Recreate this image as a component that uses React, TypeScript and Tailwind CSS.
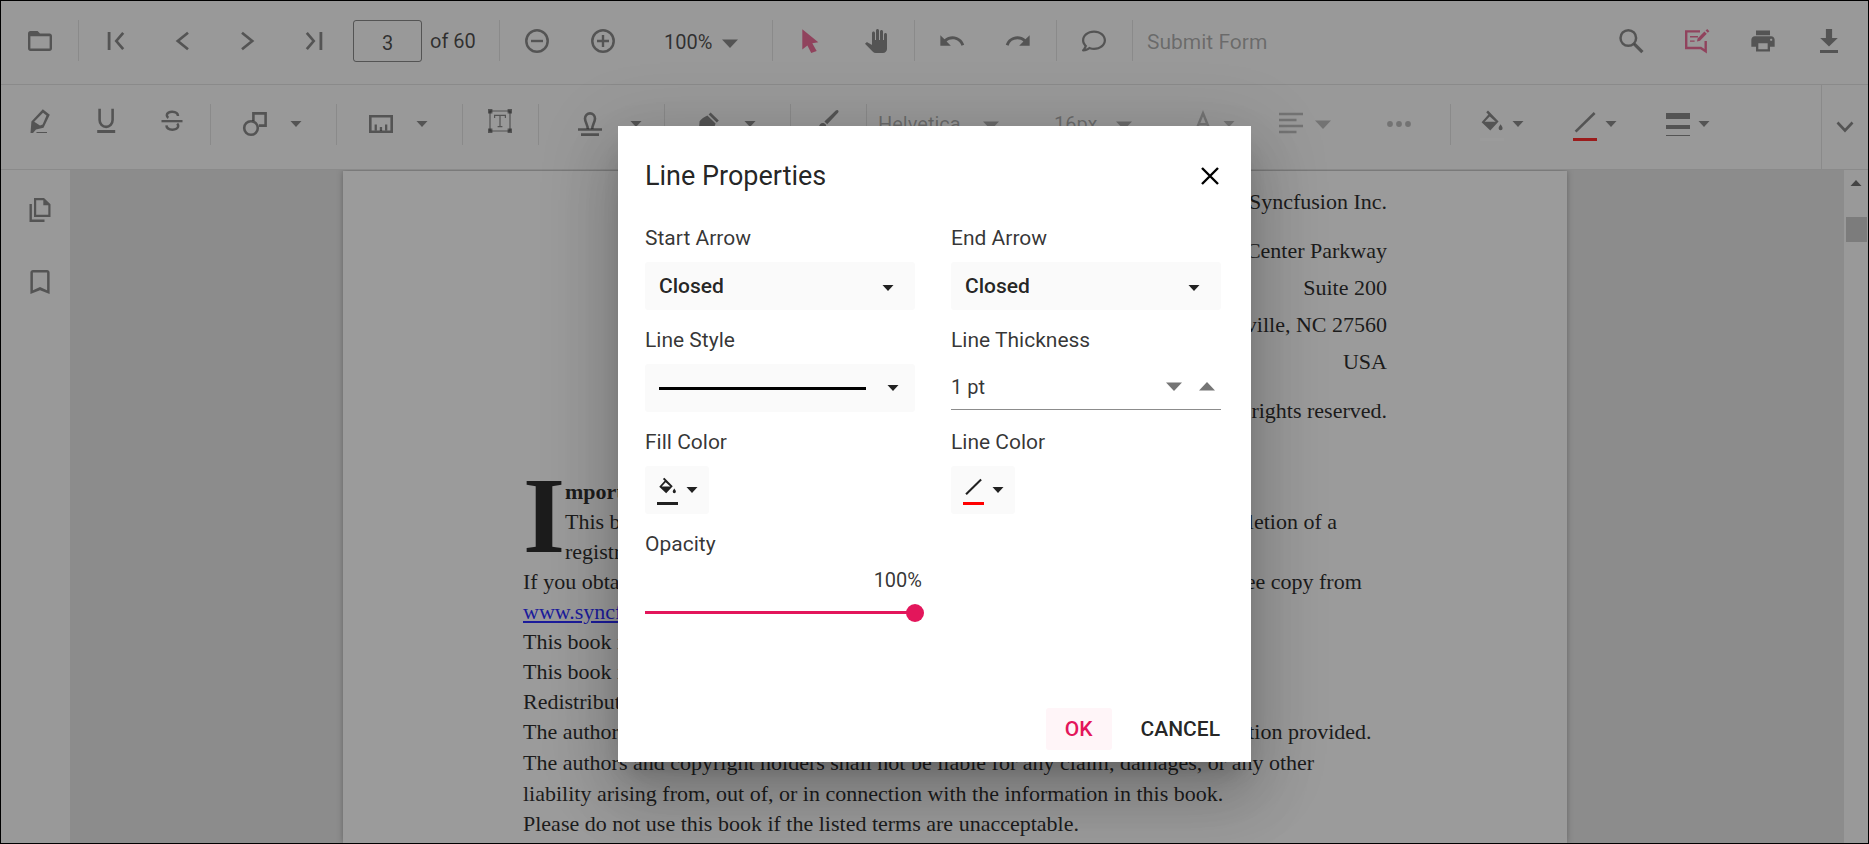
import React from "react";
import { FaRegComment } from "react-icons/fa";
import { MdPanTool, MdPrint, MdRedo, MdUndo } from "react-icons/md";

type Kids = { children?: React.ReactNode };

function Icon({ children, size = 24 }: Kids & { size?: number }) {
  return (
    <svg width={size} height={size} viewBox="0 0 24 24" fill="currentColor" className="shrink-0 overflow-visible" aria-hidden="true">
      {children}
    </svg>
  );
}

function SmallCaret({ up = false }: { up?: boolean }) {
  return (
    <svg width="12" height="6" viewBox="0 0 12 6" fill="currentColor" className="shrink-0" aria-hidden="true">
      <path d={up ? "M0.5 6h11L6 0z" : "M0.5 0h11L6 6z"} />
    </svg>
  );
}

function BigCaret({ up = false }: { up?: boolean }) {
  return (
    <svg width="16" height="9" viewBox="0 0 16 9" fill="currentColor" className="shrink-0" aria-hidden="true">
      <path d={up ? "M0 8.5h16L8 0z" : "M0 0.5h16L8 9z"} />
    </svg>
  );
}

function Separator() {
  return <span className="ml-[5px] mr-1 h-[41px] w-px shrink-0 bg-[#dcdcdc]" />;
}

function ToolButton({ label, children, active = false }: Kids & { label: string; active?: boolean }) {
  return (
    <button
      type="button"
      aria-label={label}
      className={
        active
          ? "flex h-[54px] w-[66px] shrink-0 items-center justify-center text-[#e3165b]/75"
          : "flex h-[54px] w-[66px] shrink-0 items-center justify-center"
      }
    >
      {children}
    </button>
  );
}

function FormatButton({ label, children }: Kids & { label: string }) {
  return (
    <button type="button" aria-label={label} className="flex h-[54px] w-[66px] shrink-0 items-center justify-center pb-[6px]">
      {children}
    </button>
  );
}

function FolderIcon() {
  return (
    <Icon>
      <path
        fillRule="evenodd"
        d="M2.4 2h7.2L12 4.6h9.6c1.3 0 2.4 1 2.4 2.4v12.6c0 1.3-1.1 2.4-2.4 2.4H2.4C1.1 22 0 21 0 19.6V4.4C0 3 1.1 2 2.4 2zM2.4 7.2v12.4h19.2V7.2z"
      />
    </Icon>
  );
}

function Chevron({ points }: { points: string }) {
  return <polyline points={points} fill="none" stroke="currentColor" strokeWidth="2.7" />;
}

function BucketIcon() {
  return (
    <Icon>
      <path d="M6.2 1.2 8 -.4 18.6 10.4 10.3 19.4 1.6 11.2 8.4 3.6zM9.7 5.4 4.7 10.7h11z" fillRule="evenodd" />
      <path d="M20.6 13.2c1.2 1.7 2 3 2 4a2 2 0 0 1-4 0c0-1 .8-2.3 2-4z" />
    </Icon>
  );
}

function DiagonalIcon() {
  return (
    <Icon>
      <path d="M2.6 20.6 21.6 2" fill="none" stroke="currentColor" strokeWidth="2.6" />
    </Icon>
  );
}

function MainToolbar() {
  return (
    <div role="toolbar" aria-label="Viewer" className="flex h-[84px] shrink-0 items-center border-b border-[#dcdcdc] bg-[#fafafa] px-[6px] pb-1 text-black/55">
      <ToolButton label="Open file"><FolderIcon /></ToolButton>
      <Separator />
      <ToolButton label="First page">
        <Icon><path d="M3.7 3h2.8v18H3.7z" /><Chevron points="19.2 3.8 12.3 12 19.2 20.2" /></Icon>
      </ToolButton>
      <ToolButton label="Previous page"><Icon><Chevron points="18 3.8 7.8 12 18 20.2" /></Icon></ToolButton>
      <ToolButton label="Next page"><Icon><Chevron points="6 3.8 16.2 12 6 20.2" /></Icon></ToolButton>
      <ToolButton label="Last page">
        <Icon><path d="M17.5 3h2.8v18h-2.8z" /><Chevron points="4.8 3.8 11.7 12 4.8 20.2" /></Icon>
      </ToolButton>
      <div className="flex w-[147px] shrink-0 items-center gap-2 pl-[6px] text-[20px] text-black/85">
        <input aria-label="Page number" defaultValue="3" className="h-[42px] w-[69px] rounded-[3px] border border-black/55 bg-transparent pt-1 text-center" />
        <span className="whitespace-nowrap">of 60</span>
      </div>
      <Separator />
      <ToolButton label="Zoom out">
        <Icon><circle cx="12" cy="12" r="10.7" fill="none" stroke="currentColor" strokeWidth="2.5" /><path d="M6 10.8h12v2.4H6z" /></Icon>
      </ToolButton>
      <ToolButton label="Zoom in">
        <Icon><circle cx="12" cy="12" r="10.7" fill="none" stroke="currentColor" strokeWidth="2.5" /><path d="M6 10.8h4.8V6h2.4v4.8H18v2.4h-4.8V18h-2.4v-4.8H6z" /></Icon>
      </ToolButton>
      <div className="relative w-[131px] shrink-0">
        <select aria-label="Zoom level" className="h-[42px] w-full appearance-none bg-transparent pl-7 pt-0.5 text-[20px] text-black/85">
          <option>100%</option>
        </select>
        <span className="pointer-events-none absolute right-[29px] top-[19px]"><BigCaret /></span>
      </div>
      <Separator />
      <ToolButton label="Select text" active>
        <Icon><path d="M4.3.3 20.3 13.2l-6 1.1 4.4 7.6-5.5 2.1-3.8-7.6-5.1 4z" /></Icon>
      </ToolButton>
      <ToolButton label="Pan"><MdPanTool size={24} /></ToolButton>
      <Separator />
      <ToolButton label="Undo"><MdUndo size={28} /></ToolButton>
      <ToolButton label="Redo"><MdRedo size={28} /></ToolButton>
      <Separator />
      <ToolButton label="Add comment"><FaRegComment size={24} /></ToolButton>
      <Separator />
      <button type="button" disabled className="h-[42px] shrink-0 whitespace-nowrap pl-[10px] pt-1 text-[21px] text-black/38">
        Submit Form
      </button>
      <div className="ml-auto flex shrink-0">
        <ToolButton label="Find text">
          <Icon><circle cx="9.3" cy="9" r="7.8" fill="none" stroke="currentColor" strokeWidth="2.5" /><path d="M15.4 15.2l8 8" stroke="currentColor" strokeWidth="3.2" /></Icon>
        </ToolButton>
        <ToolButton label="Edit annotations" active>
          <Icon>
            <path d="M15 2.4H1.2v16.6h14.6l4.9 3.2V12" fill="none" stroke="currentColor" strokeWidth="2.4" />
            <path d="M5 7h8v1.4H5zM5 11.4h4.6v1.4H5zM12 12.6l.6-3.2 6.8-7 2.4 2.3-6.8 7zM20.6 1.6 22.2 0l2.2 2.2-1.6 1.6z" />
          </Icon>
        </ToolButton>
        <ToolButton label="Print"><MdPrint size={28} /></ToolButton>
        <ToolButton label="Download">
          <Icon><path d="M8.9 0h6.2v9h5.7L12 17.6 3.2 9h5.7zM3 21h18v3H3z" /></Icon>
        </ToolButton>
      </div>
    </div>
  );
}

function AnnotationToolbar() {
  return (
    <div role="toolbar" aria-label="Annotations" className="flex h-[85px] shrink-0 items-stretch border-b border-[#dcdcdc] bg-[#fafafa] pl-[6px] text-black/55">
      <div className="flex min-w-0 flex-1 items-center overflow-hidden pb-[6px]">
        <FormatButton label="Highlight">
          <Icon>
            <path fillRule="evenodd" d="M14.8.3 21.8 5.7 15.5 18.7 8 20.6 5 24H2.5l.9-11.5zM15 3.8 6.2 12.7 12 16.4l2.6-1L18.5 6.5z" />
            <path d="M8.5 23h10.5v1H8.5z" />
          </Icon>
        </FormatButton>
        <FormatButton label="Underline">
          <Icon>
            <path d="M5.6-.3v11.2a6.5 7 0 0 0 13 0V-.3" fill="none" stroke="currentColor" strokeWidth="2.6" />
            <path d="M3.2 21h18v3h-18z" />
          </Icon>
        </FormatButton>
        <FormatButton label="Strikethrough">
          <Icon>
            <path d="M1.5 11h21v2.3h-21z" />
            <path d="M18 7C17.6 1.4 6.8 1.6 6.8 6.3c0 1.2.6 2 1.6 2.6M6.4 16.4c.4 5.8 11.8 5.4 11.8.5 0-1-.4-1.7-1-2.3" fill="none" stroke="currentColor" strokeWidth="2.5" />
          </Icon>
        </FormatButton>
        <Separator />
        <button type="button" aria-label="Shapes" className="flex h-[54px] w-[116px] shrink-0 items-center gap-[23px] pl-7">
          <Icon>
            <path d="M10.4 9V1.4h12.2v12.2H16" fill="none" stroke="currentColor" strokeWidth="2.6" />
            <circle cx="8" cy="16" r="6.8" fill="none" stroke="currentColor" strokeWidth="2.6" />
          </Icon>
          <SmallCaret />
        </button>
        <Separator />
        <button type="button" aria-label="Measure" className="flex h-[54px] w-[116px] shrink-0 items-center gap-[23px] pl-7">
          <Icon>
            <path d="M1.3 4.3h21.4v15.4H1.3z" fill="none" stroke="currentColor" strokeWidth="2.6" />
            <path d="M5.6 12.5h2.3v6H5.6zM10.8 15h2.3v4h-2.3zM16 12.5h2.3v6H16z" />
          </Icon>
          <SmallCaret />
        </button>
        <Separator />
        <FormatButton label="Free text">
          <Icon>
            <path d="M2 2h20v20H2z" fill="none" stroke="currentColor" strokeWidth="1.2" />
            <path d="M0 0h4.4v4.4H0zM19.6 0H24v4.4h-4.4zM0 19.6h4.4V24H0zM19.6 19.6H24V24h-4.4z" />
            <path d="M6.6 9V6.4h10.8V9M12 6.4v11.2M9.6 17.6h4.8" fill="none" stroke="currentColor" strokeWidth="1.2" />
          </Icon>
        </FormatButton>
        <Separator />
        <button type="button" aria-label="Stamp" className="flex h-[54px] w-[116px] shrink-0 items-center gap-7 pl-[35px]">
          <Icon>
            <path d="M9.6 17c.8-3.4-2.6-6.4-2.6-10.4a5 5.2 0 0 1 10 0c0 4-3.4 7-2.6 10.4" fill="none" stroke="currentColor" strokeWidth="2.6" />
            <path d="M0 16.2h24v2.6H0zM3 21.2h18V24H3z" />
          </Icon>
          <SmallCaret />
        </button>
        <Separator />
        <button type="button" aria-label="Signature" className="flex h-[54px] w-[116px] shrink-0 items-center gap-[23px] pl-7">
          <Icon>
            <path d="M11.6 2.6 13.6.6l8.2 8-2 2zM10.4 3.6l8.2 8c-.8 4-3.6 6.6-8 8L4.4 22 2 20.6l6.4-6.6L1.6 20 2.6 9.2c2-2.6 4.4-3.8 7.800-5.600z" />
          </Icon>
          <SmallCaret />
        </button>
        <Separator />
        <FormatButton label="Ink">
          <Icon>
            <path d="M8.4 12.400 19.800 1.600c1.800-1.600 3.800.4 2.200 2.200L11.200 15.200zM6.600 14c3.200 0 4.200 2.600 3.400 5-1 3-5.800 4-9.400 1.800 2.400-.6 2-6.800 6-6.800z" />
          </Icon>
        </FormatButton>
        <Separator />
        <div className="relative w-[167px] shrink-0 text-black/38">
          <select aria-label="Font family" disabled className="h-[42px] w-full appearance-none bg-transparent pl-[7px] text-[20px] disabled:opacity-100">
            <option>Helvetica</option>
          </select>
          <span className="pointer-events-none absolute right-[39px] top-[18px]"><BigCaret /></span>
        </div>
        <div className="relative w-[132px] shrink-0 text-black/38">
          <select aria-label="Font size" disabled className="h-[42px] w-full appearance-none bg-transparent pl-4 text-[20px] disabled:opacity-100">
            <option>16px</option>
          </select>
          <span className="pointer-events-none absolute right-[38px] top-[18px]"><BigCaret /></span>
        </div>
        <button type="button" aria-label="Font color" disabled className="flex h-[54px] w-[97px] shrink-0 items-center gap-2 pl-[21px] text-black/30">
          <Icon>
            <path d="M5.6 17 12 1.2 18.4 17M8 12.2h8" fill="none" stroke="currentColor" strokeWidth="2.4" />
          </Icon>
          <SmallCaret />
        </button>
        <button type="button" aria-label="Text align" disabled className="flex h-[54px] w-[91px] shrink-0 items-center gap-3 pl-3 text-black/30">
          <Icon>
            <path d="M0 .8h24v2.4H0zM0 6.8h17.5v2.4H0zM0 12.8h24v2.4H0zM0 18.8h17.5v2.4H0z" />
          </Icon>
          <BigCaret />
        </button>
        <button type="button" aria-label="More text options" disabled className="flex h-[54px] w-[87px] shrink-0 items-center justify-center pr-[5px] text-black/30">
          <Icon><circle cx="3" cy="12" r="2.9" /><circle cx="12" cy="12" r="2.9" /><circle cx="21" cy="12" r="2.9" /></Icon>
        </button>
        <Separator />
        <button type="button" aria-label="Fill color" className="ml-px flex h-[54px] w-[93px] shrink-0 items-center gap-2 pl-6">
          <span className="flex flex-col gap-[3px] pt-1">
            <BucketIcon />
            <span className="h-[3px] w-6 bg-white" />
          </span>
          <SmallCaret />
        </button>
        <button type="button" aria-label="Line color" className="flex h-[54px] w-[93px] shrink-0 items-center gap-2 pl-6">
          <span className="flex flex-col gap-[3px] pt-1">
            <DiagonalIcon />
            <span className="h-[3px] w-6 bg-[#ff0000]" />
          </span>
          <SmallCaret />
        </button>
        <button type="button" aria-label="Line thickness" className="flex h-[54px] w-[93px] shrink-0 items-center gap-2 pl-6">
          <span className="flex w-6 flex-col gap-[6px]">
            <span className="h-[6px] bg-current" />
            <span className="h-1 bg-current" />
            <span className="h-px bg-current" />
          </span>
          <SmallCaret />
        </button>
      </div>
      <button type="button" aria-label="Scroll toolbar" className="flex w-[47px] shrink-0 items-center justify-center border-l border-[#dcdcdc]">
        <svg width="18" height="12" viewBox="0 0 18 12" aria-hidden="true">
          <path d="M1.5 1.5 9 9.5l7.5-8" fill="none" stroke="currentColor" strokeWidth="2.6" />
        </svg>
      </button>
    </div>
  );
}

function Sidebar() {
  return (
    <nav aria-label="Panels" className="flex w-[69px] shrink-0 flex-col bg-[#fafafa] pl-2 pt-1 text-black/55">
      <button type="button" aria-label="Page thumbnails" className="flex h-[72px] items-center justify-center">
        <Icon>
          <path fillRule="evenodd" d="M6 0h10l6.5 6.2V19H6zM8.2 2.2v14.6h12.1V7.2h-5V2.2z" />
          <path d="M1.5 6h2.4v15.6H16.5V24h-15z" />
        </Icon>
      </button>
      <button type="button" aria-label="Bookmarks" className="flex h-[72px] items-center justify-center">
        <Icon>
          <path fillRule="evenodd" d="M5 0h14c1.5 0 2.6 1.1 2.6 2.6V24L12 20.2 2.4 24V2.6C2.4 1.1 3.5 0 5 0zM4.9 2.5v17.7L12 17l7.1 3.2V2.5z" />
        </Icon>
      </button>
    </nav>
  );
}

function DocumentPage() {
  return (
    <article className="w-[1224px] shrink-0 bg-white px-[180px] font-['Liberation_Serif',serif] text-[22px] text-black shadow-[0_0_6px_rgba(0,0,0,0.35)]">
      <div className="flex flex-col pt-3 text-right leading-[37px]">
        <p className="mb-3">Copyright © 2014 Syncfusion Inc.</p>
        <p>2501 Aerial Center Parkway</p>
        <p>Suite 200</p>
        <p>Morrisville, NC 27560</p>
        <p>USA</p>
        <p className="mt-3">All rights reserved.</p>
      </div>
      <div className="whitespace-nowrap pt-12 leading-[30px]">
        <div className="flex">
          <span className="w-[42px] shrink-0 text-[108px] font-bold leading-[78px]">I</span>
          <div>
            <p className="font-bold">mportant licensing information. Please read.</p>
            <p>
              This book is available for free download from www.syncfusion.com on completion of a
              <br />
              registration form.
            </p>
          </div>
        </div>
        <p>
          If you obtained this book from any other source, please register and download a free copy from
          <br />
          <a href="#" className="text-[#0000ff] underline">www.syncfusion.com</a>.
        </p>
        <p>This book is licensed for reading only if obtained from www.syncfusion.com.</p>
        <p>This book is licensed strictly for personal or educational use.</p>
        <p>Redistribution in any form is prohibited.</p>
        <p>The authors and copyright holders provide absolutely no warranty for any information provided.</p>
        <p className="leading-[31px]">
          The authors and copyright holders shall not be liable for any claim, damages, or any other
          <br />
          liability arising from, out of, or in connection with the information in this book.
        </p>
        <p>Please do not use this book if the listed terms are unacceptable.</p>
      </div>
    </article>
  );
}

function ArrowSelect({ id, label }: { id: string; label: string }) {
  return (
    <div className="flex flex-col">
      <label htmlFor={id} className="h-9 leading-6">{label}</label>
      <div className="relative">
        <select id={id} className="h-12 w-full appearance-none rounded-[3px] bg-[#fafafa] pl-[14px] pt-0.5 text-[21px] font-medium text-black/87">
          <option>Closed</option>
          <option>None</option>
          <option>Open</option>
        </select>
        <span className="pointer-events-none absolute right-[21px] top-[23px] text-[#212121]"><SmallCaret /></span>
      </div>
    </div>
  );
}

function LineDialog() {
  return (
    <div
      role="dialog"
      aria-label="Line Properties"
      className="flex min-h-[636px] w-[633px] flex-col bg-white text-[21px] text-black/80 shadow-[0_16px_22px_-10px_rgba(0,0,0,0.2),0_36px_57px_4px_rgba(0,0,0,0.14),0_14px_69px_12px_rgba(0,0,0,0.12)]"
    >
      <header className="flex items-center justify-between pb-6 pl-[27px] pr-[30px] pt-8">
        <h2 className="text-[27px] leading-9 text-black/87">Line Properties</h2>
        <button type="button" aria-label="Close" className="flex h-6 w-[22px] items-center justify-center text-black">
          <svg width="18" height="18" viewBox="0 0 18 18" aria-hidden="true">
            <path d="M1 1l16 16M17 1 1 17" stroke="currentColor" strokeWidth="2.4" />
          </svg>
        </button>
      </header>
      <div className="grid grid-cols-2 gap-x-9 gap-y-[18px] pl-[27px] pr-[30px] pt-2">
        <ArrowSelect id="start-arrow" label="Start Arrow" />
        <ArrowSelect id="end-arrow" label="End Arrow" />
        <div className="flex flex-col">
          <label htmlFor="line-style" className="h-9 leading-6">Line Style</label>
          <button id="line-style" type="button" className="flex h-12 items-center justify-between rounded-[3px] bg-[#fafafa] pl-[14px] pr-4 text-[#212121]">
            <span className="h-[3px] w-[207px] bg-black" />
            <SmallCaret />
          </button>
        </div>
        <div className="flex flex-col">
          <label htmlFor="thickness" className="h-9 leading-6">Line Thickness</label>
          <div className="flex h-[46px] items-center gap-[17px] border-b border-[#8c8c8c] pr-[6px] text-[#757575]">
            <input id="thickness" defaultValue="1 pt" className="h-9 min-w-0 flex-1 bg-transparent text-[20px] text-black/80" />
            <button type="button" aria-label="Decrease thickness"><BigCaret /></button>
            <button type="button" aria-label="Increase thickness"><BigCaret up /></button>
          </div>
        </div>
        <div className="flex flex-col">
          <label htmlFor="fill-color" className="h-9 leading-6">Fill Color</label>
          <button id="fill-color" type="button" className="flex h-12 w-16 items-center gap-2 rounded-[3px] bg-[#fafafa] pl-3 text-[#212121]">
            <span className="flex w-[21px] flex-col items-center gap-[5px] pt-[3px]">
              <Icon size={19}><BucketIcon /></Icon>
              <span className="h-[3px] w-full bg-[#212121]" />
            </span>
            <SmallCaret />
          </button>
        </div>
        <div className="flex flex-col">
          <label htmlFor="line-color" className="h-9 leading-6">Line Color</label>
          <button id="line-color" type="button" className="flex h-12 w-16 items-center gap-2 rounded-[3px] bg-[#fafafa] pl-3 text-[#212121]">
            <span className="flex w-[21px] flex-col items-center gap-[5px] pt-[3px]">
              <Icon size={19}><DiagonalIcon /></Icon>
              <span className="h-[3px] w-full bg-[#ff0000]" />
            </span>
            <SmallCaret />
          </button>
        </div>
        <div className="flex flex-col">
          <label htmlFor="opacity" className="h-9 leading-6">Opacity</label>
          <output htmlFor="opacity" className="-mr-[7px] text-right text-[20px] leading-6">100%</output>
          <div className="relative mt-2 h-[26px]">
            <span className="absolute inset-x-0 top-[11px] h-[3px] bg-[#e3165b]" />
            <input
              id="opacity"
              type="range"
              defaultValue={100}
              className="absolute -inset-x-[9px] top-1 h-[18px] w-[288px] appearance-none bg-transparent [&::-webkit-slider-thumb]:size-[18px] [&::-webkit-slider-thumb]:appearance-none [&::-webkit-slider-thumb]:rounded-full [&::-webkit-slider-thumb]:bg-[#e3165b]"
            />
          </div>
        </div>
      </div>
      <footer className="mt-auto flex justify-end gap-[10px] p-3 font-medium">
        <button type="button" className="h-[42px] rounded-[3px] bg-[#fff5f8] px-[19px] pt-0.5 text-[#e3165b]">OK</button>
        <button type="button" className="h-[42px] rounded-[3px] px-[19px] pt-0.5 text-black/87">CANCEL</button>
      </footer>
    </div>
  );
}

export default function App() {
  return (
    <div className="relative flex h-screen flex-col overflow-hidden border border-black bg-[#fafafa] font-[Roboto,sans-serif]">
      <MainToolbar />
      <AnnotationToolbar />
      <div className="flex min-h-0 flex-1">
        <Sidebar />
        <main className="flex min-w-0 flex-1 justify-center overflow-hidden bg-[#e0e0e0] pr-1 pt-px">
          <DocumentPage />
        </main>
        <div aria-hidden="true" className="flex w-6 shrink-0 flex-col items-center bg-[#fafafa] pt-[10px] text-[#505050]">
          <SmallCaret up />
          <span className="mt-[31px] h-[25px] w-[21px] bg-[#c1c1c1]" />
        </div>
      </div>
      <div className="absolute inset-0 flex items-start justify-center bg-[#383838]/50 pt-[125px]">
        <LineDialog />
      </div>
    </div>
  );
}
